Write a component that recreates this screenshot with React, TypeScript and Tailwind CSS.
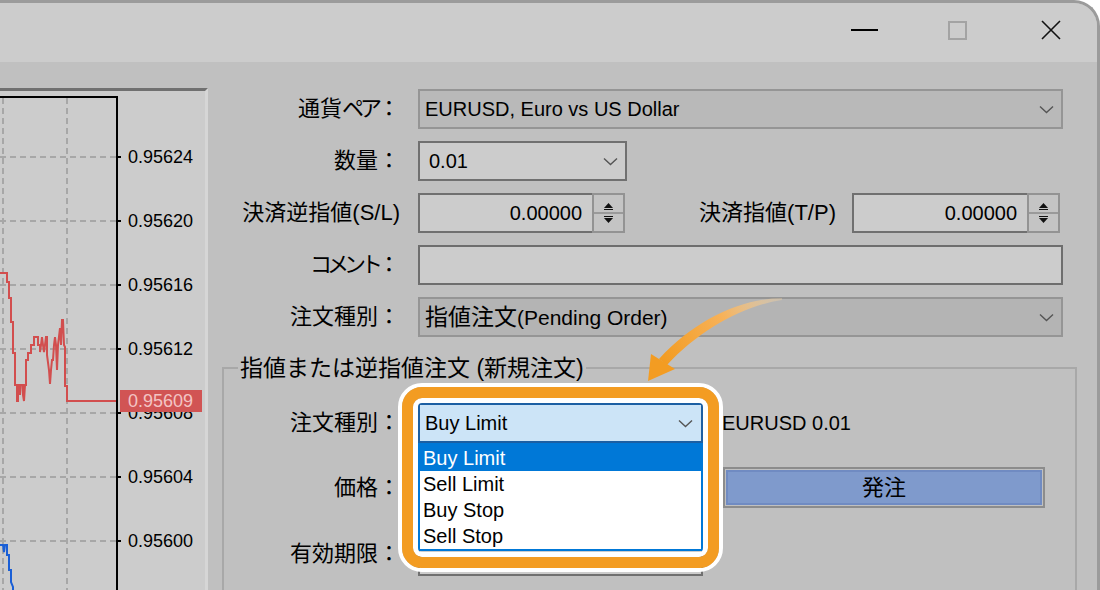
import React from 'react';

const font = "font-['Liberation_Sans','Noto_Sans_CJK_JP',sans-serif]";

const prices = ['0.95624', '0.95620', '0.95616', '0.95612', '0.95608', '0.95604', '0.95600'];
const gridY = [157, 221, 285, 349, 413, 477, 541];

const redLine =
  '0,273 7,273 7,282 9,282 9,298 11,298 11,322 13,322 13,353 15,353 15,385 17,385 17,401 18,401 18,385 20,385 20,395 21,385 23,385 23,395 24,401 25,385 26,385 26,360 28,360 28,353 31,353 31,345 34,345 34,337 38,337 38,345 40,345 40,352 41,345 42,337 43,345 44,352 45,345 46,337 47,337 47,355 49,370 50,384 51,370 52,360 53,360 54,345 55,337 56,345 57,370 58,345 60,328 61,345 62,320 63,320 64,345 65,347 65,386 67,386 67,401 117,401';
const blueLine = '0,545 3,545 4,552 5,545 7,545 7,555 9,555 9,570 11,570 11,582 13,587 13,592';

function Chevron() {
  return (
    <svg width="15" height="9" viewBox="0 0 15 9" className="shrink-0">
      <path d="M1 1.5l6.5 6 6.5-6" fill="none" stroke="#555" strokeWidth="1.4" />
    </svg>
  );
}

function SpinArrows() {
  return (
    <svg width="29" height="36" viewBox="0 0 29 36">
      <line x1="0" y1="18" x2="29" y2="18" stroke="#9a9a9a" strokeWidth="2" />
      <path d="M14.5 8l4.5 5h-9z" fill="#111" />
      <line x1="10" y1="14.5" x2="19" y2="14.5" stroke="#111" strokeWidth="1.2" />
      <line x1="10" y1="21.5" x2="19" y2="21.5" stroke="#111" strokeWidth="1.2" />
      <path d="M10 23h9l-4.5 5z" fill="#111" />
    </svg>
  );
}

function Spinner({ width }: { width: string }) {
  return (
    <div className={`flex h-[40px] ${width}`}>
      <div className="flex-1 border-2 border-r-0 border-[#707070] bg-[#cccccc] flex items-center justify-end pr-[10px] text-[20px]">
        0.00000
      </div>
      <div className="w-[33px] border-2 border-[#939393] bg-[#c4c4c4] flex items-center justify-center">
        <SpinArrows />
      </div>
    </div>
  );
}

function Label({ children }: { children: React.ReactNode }) {
  return <div className="text-right text-[22px] leading-none whitespace-nowrap text-black">{children}</div>;
}

export default function App() {
  return (
    <div className={`relative w-[1100px] h-[590px] bg-white overflow-hidden ${font}`}>
      <div className="h-full flex flex-col rounded-tr-[26px] border-t-[3px] border-r-[3px] border-[#9b9b9b] bg-[#c0c0c0] overflow-hidden">
        {/* title bar */}
        <div className="h-[59px] shrink-0 bg-[#cccccc] flex items-center justify-end pb-[5px]">
          <div className="w-[93px] flex justify-center">
            <div className="w-[27px] h-[2px] bg-black" />
          </div>
          <div className="w-[93px] flex justify-center">
            <div className="w-[19px] h-[19px] border-2 border-[#a3a3a3]" />
          </div>
          <div className="w-[93px] flex justify-center">
            <svg width="20" height="20" viewBox="0 0 20 20">
              <path d="M1 1L19 19M19 1L1 19" stroke="#111" strokeWidth="1.6" />
            </svg>
          </div>
        </div>

        <div className="flex-1 flex min-h-0">
          {/* chart */}
          <div className="w-[208px] shrink-0 pt-[26px] flex flex-col">
            <div className="relative flex-1 border-t-[3px] border-[#707070] border-r-[3px] border-r-[#d6d6d6] bg-[#cccccc]">
              <svg className="absolute left-0 top-0" width="205" height="499" viewBox="0 91 205 499">
                {[3, 67].map((x) => (
                  <line key={x} x1={x} y1={98} x2={x} y2={590} stroke="#a7a7a7" strokeWidth="2" strokeDasharray="6 4" />
                ))}
                {gridY.map((y) => (
                  <line key={y} x1={0} y1={y} x2={116} y2={y} stroke="#a7a7a7" strokeWidth="2" strokeDasharray="6 4" />
                ))}
                <polyline points={redLine} fill="none" stroke="#d24e4e" strokeWidth="2" />
                <polyline points={blueLine} fill="none" stroke="#1a5fd6" strokeWidth="2" />
                <line x1={0} y1={97} x2={118} y2={97} stroke="#000" strokeWidth="2" />
                <line x1={117} y1={96} x2={117} y2={590} stroke="#000" strokeWidth="2" />
                {gridY.map((y) => (
                  <line key={y} x1={117} y1={y} x2={121} y2={y} stroke="#000" strokeWidth="2" />
                ))}
              </svg>
              <div className="absolute left-[128px] top-[34px] flex flex-col">
                {prices.map((p) => (
                  <div key={p} className="h-[64px] flex items-center text-[18px] text-black">
                    {p}
                  </div>
                ))}
              </div>
              <div className="absolute left-[120px] top-[299px] w-[82px] h-[22px] bg-[#d15454] text-[#f3c4c4] text-[18px] leading-[22px] pl-[8px]">
                0.95609
              </div>
            </div>
          </div>

          {/* form */}
          <div className="flex-1 pl-[14px] pr-[20px] pt-[27px] text-black">
            <div className="grid grid-cols-[178px_1fr] gap-x-[18px] gap-y-[12px] pr-[14px] items-center">
              <Label>
                通貨<span className="tracking-[-4px]">ペア</span>：
              </Label>
              <div className="h-[40px] border-2 border-[#959595] bg-[#b9b9b9] flex items-center justify-between pl-[5px] pr-[7px] text-[20px]">
                <span>EURUSD, Euro vs US Dollar</span>
                <Chevron />
              </div>

              <Label>数量：</Label>
              <div className="w-[209px] h-[40px] border-2 border-[#707070] bg-[#cccccc] flex items-center justify-between pl-[9px] pr-[7px] text-[20px]">
                <span>0.01</span>
                <Chevron />
              </div>

              <Label>決済逆指値(S/L)</Label>
              <div className="flex items-center pr-[3px]">
                <Spinner width="w-[207px]" />
                <div className="flex-1 pr-[16px]">
                  <Label>決済指値(T/P)</Label>
                </div>
                <Spinner width="w-[208px]" />
              </div>

              <Label>
                <span className="tracking-[-5px]">コメント</span>：
              </Label>
              <div className="h-[40px] border-2 border-[#6e6e6e] bg-[#cccccc]" />

              <Label>注文種別：</Label>
              <div className="h-[40px] border-2 border-[#959595] bg-[#b4b4b4] flex items-center justify-between pl-[5px] pr-[7px]">
                <span className="text-[23px]">
                  指値注文<span className="text-[21px]">(Pending Order)</span>
                </span>
                <Chevron />
              </div>
            </div>

            <fieldset className="mt-[18px] border-2 border-[#a8a8a8] pt-[22px] pb-[40px]">
              <legend className="ml-[14px] px-[2px] text-[23px] leading-[26px]">指値または逆指値注文 (新規注文)</legend>
              <div className="grid grid-cols-[176px_285px_1fr] gap-x-[18px] gap-y-[24px] items-center">
                <Label>注文種別：</Label>
                <div className="relative h-[40px]">
                  <div className="h-full border-2 border-[#1c5fa3] bg-[#cce4f7] flex items-center justify-between pl-[5px] pr-[8px] text-[20px]">
                    <span>Buy Limit</span>
                    <Chevron />
                  </div>
                  <div className="absolute left-0 top-[40px] w-full h-[108px] z-10 border-2 border-[#0078d7] bg-white text-[20px]">
                    <div className="h-[26px] leading-[26px] pl-[3px] bg-[#0078d7] text-white">Buy Limit</div>
                    <div className="h-[26px] leading-[26px] pl-[3px]">Sell Limit</div>
                    <div className="h-[26px] leading-[26px] pl-[3px]">Buy Stop</div>
                    <div className="h-[26px] leading-[26px] pl-[3px]">Sell Stop</div>
                  </div>
                  <div className="absolute -left-[20px] -top-[20px] w-[325px] h-[189px] z-20 pointer-events-none rounded-[24px] border-4 border-white">
                    <div className="h-full rounded-[20px] border-[11px] border-[#f39c22] shadow-[inset_0_0_0_5px_white]" />
                  </div>
                </div>
                <div className="text-[20px] pl-[1px]">EURUSD 0.01</div>

                <Label>価格：</Label>
                <div className="h-[40px] border-2 border-[#707070] bg-[#cccccc]" />
                <div className="ml-[2px] w-[322px] h-[41px] border-2 border-[#8c8c8c] p-[1px]">
                  <div className="h-full border-2 border-[#708bc2] bg-[#7f9acc] flex items-center justify-center text-[22px]">
                    発注
                  </div>
                </div>

                <Label>有効期限：</Label>
                <div className="h-[44px] border-2 border-[#707070] bg-[#cccccc]" />
                <div />
              </div>
            </fieldset>
          </div>
        </div>
      </div>

      {/* annotation arrow */}
      <svg className="absolute left-0 top-0 pointer-events-none" width="1100" height="590" viewBox="0 0 1100 590">
        <defs>
          <linearGradient id="arw" gradientUnits="userSpaceOnUse" x1="782" y1="298" x2="665" y2="362">
            <stop offset="0" stopColor="#fbd9a6" stopOpacity="0.3" />
            <stop offset="0.45" stopColor="#f7b25a" />
            <stop offset="1" stopColor="#f39c22" />
          </linearGradient>
        </defs>
        <path d="M782 298C740 299 695 320 659 359L667 365C700 330 742 306 782 300Z" fill="url(#arw)" />
        <path d="M651 354L675 369L648 381Z" fill="#f39c22" />
      </svg>
    </div>
  );
}
